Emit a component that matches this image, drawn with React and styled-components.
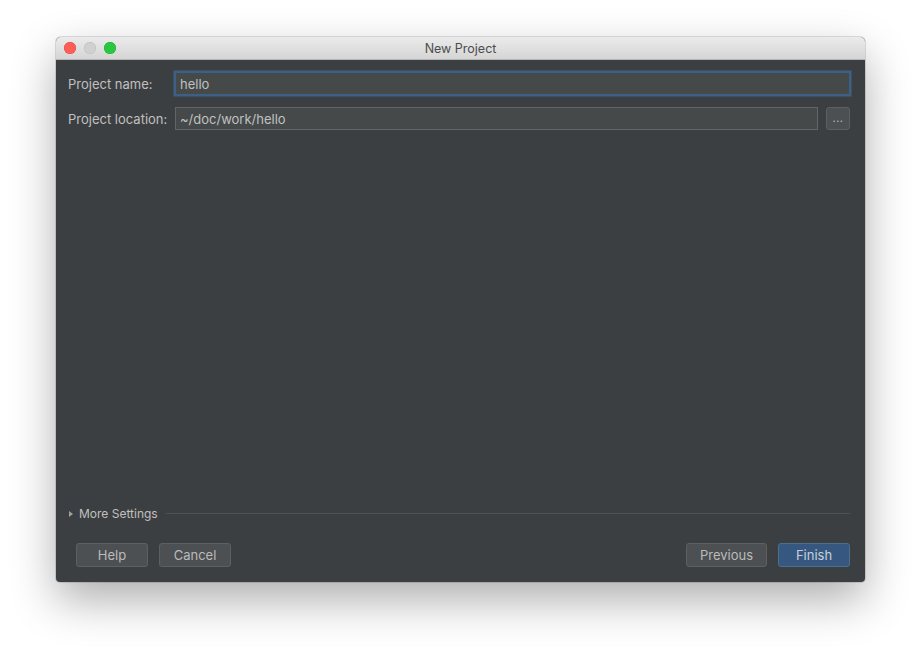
import React from 'react'
import styled, { createGlobalStyle } from 'styled-components'

const GlobalStyle = createGlobalStyle`
  html, body {
    margin: 0;
    padding: 0;
    background: #ffffff;
  }
  body {
    font-family: Inter, "Liberation Sans", Arial, sans-serif;
    -webkit-font-smoothing: antialiased;
  }
`;

export default function App() {
  return (
    <>
      <GlobalStyle />
      <Page>
        <Window>
          <TitleBar>
            <Lights>
              <Light color="#fd5f57" border="#de4a41" />
              <Light color="#d0d0d0" border="#bcbcbc" />
              <Light color="#2ac840" border="#1daa2d" />
            </Lights>
            <Title>New Project</Title>
          </TitleBar>
          <Body>
            <Form>
              <Label>Project name:</Label>
              <Field focused>hello</Field>
              <Label>Project location:</Label>
              <FieldRow>
                <Field>~/doc/work/hello</Field>
                <Browse>...</Browse>
              </FieldRow>
            </Form>
            <Spacer />
            <MoreSettings>
              <Arrow />
              <span>More Settings</span>
              <Rule />
            </MoreSettings>
            <Footer>
              <Group>
                <Button>Help</Button>
                <Button>Cancel</Button>
              </Group>
              <Group>
                <Button wide>Previous</Button>
                <Button primary>Finish</Button>
              </Group>
            </Footer>
          </Body>
        </Window>
      </Page>
    </>
  )
}

const Page = styled.div`
  width: 921px;
  height: 657px;
  padding: 37px 0 0 56px;
  box-sizing: border-box;
`;

const Window = styled.div`
  width: 809px;
  height: 545px;
  display: flex;
  flex-direction: column;
  border-radius: 5px 5px 4px 4px;
  overflow: hidden;
  background: #3c3f41;
  box-shadow: 0 0 0 1px rgba(0,0,0,0.12), 0 18px 45px rgba(0,0,0,0.32);
`;

const TitleBar = styled.div`
  height: 23px;
  flex: none;
  display: flex;
  align-items: center;
  justify-content: center;
  position: relative;
  background: linear-gradient(#ebebeb, #d5d5d5);
  border-bottom: 1px solid #b5b5b5;
  box-sizing: border-box;
`;

const Lights = styled.div`
  position: absolute;
  left: 8px;
  top: 5px;
  display: flex;
  gap: 8px;
`;

const Light = styled.span`
  width: 12px;
  height: 12px;
  border-radius: 50%;
  background: ${({ color }) => color};
  box-shadow: inset 0 0 0 0.5px ${({ border }) => border};
`;

const Title = styled.div`
  font-size: 12.5px;
  color: #4d4d4d;
  padding-top: 1px;
`;

const Body = styled.div`
  flex: 1;
  display: flex;
  flex-direction: column;
  padding: 12px 15px 15px 12px;
`;

const Form = styled.div`
  display: grid;
  grid-template-columns: 100px 1fr;
  column-gap: 7px;
  row-gap: 12px;
  align-items: center;
`;

const Label = styled.div`
  font-size: 13px;
  color: #c0c0c0;
  white-space: nowrap;
`;

const FieldRow = styled.div`
  display: flex;
  gap: 8px;
`;

const Field = styled.div`
  flex: 1;
  height: 23px;
  box-sizing: border-box;
  padding: 0 4px;
  display: flex;
  align-items: center;
  font-size: 13px;
  color: #c0c0c0;
  background: #45494a;
  border: 1px solid ${({ focused }) => (focused ? '#3d6185' : '#646464')};
  box-shadow: ${({ focused }) => (focused ? '0 0 0 1.5px #3d6185' : 'none')};
`;

const Browse = styled.div`
  width: 24px;
  height: 23px;
  box-sizing: border-box;
  border: 1px solid #5e6060;
  border-radius: 3px;
  background: #4c5052;
  color: #bbbbbb;
  font-size: 11px;
  display: flex;
  align-items: center;
  justify-content: center;
  padding-bottom: 2px;
  letter-spacing: 0.5px;
`;

const Spacer = styled.div`
  flex: 1;
`;

const MoreSettings = styled.div`
  display: flex;
  align-items: center;
  gap: 6px;
  font-size: 12px;
  color: #c0c0c0;
  padding-left: 1px;
  margin-bottom: 22px;
`;

const Arrow = styled.span`
  width: 0;
  height: 0;
  border-top: 3.5px solid transparent;
  border-bottom: 3.5px solid transparent;
  border-left: 4px solid #a0a0a0;
`;

const Rule = styled.div`
  flex: 1;
  height: 1px;
  background: #515151;
  margin-left: 2px;
`;

const Footer = styled.div`
  display: flex;
  justify-content: space-between;
  padding-left: 8px;
`;

const Group = styled.div`
  display: flex;
  gap: 11px;
`;

const Button = styled.div`
  width: ${({ wide }) => (wide ? '81px' : '72px')};
  height: 24px;
  box-sizing: border-box;
  display: flex;
  align-items: center;
  justify-content: center;
  font-size: 13px;
  border-radius: 3px;
  color: ${({ primary }) => (primary ? '#c7d0da' : '#bbbbbb')};
  background: ${({ primary }) => (primary ? '#365880' : '#4c5052')};
  border: 1px solid ${({ primary }) => (primary ? '#4c708c' : '#5e6060')};
`;
